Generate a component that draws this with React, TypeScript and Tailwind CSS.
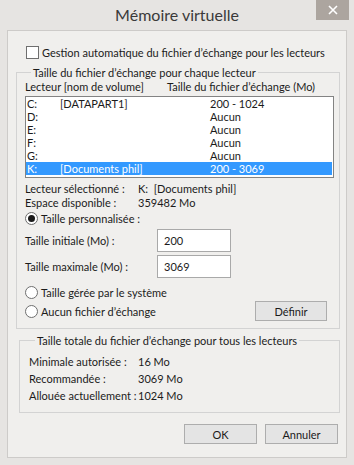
import React from 'react';

const drives = [
  { letter: 'C:', label: '[DATAPART1]', size: '200 - 1024' },
  { letter: 'D:', label: '', size: 'Aucun' },
  { letter: 'E:', label: '', size: 'Aucun' },
  { letter: 'F:', label: '', size: 'Aucun' },
  { letter: 'G:', label: '', size: 'Aucun' },
  { letter: 'K:', label: '[Documents phil]', size: '200 - 3069', selected: true },
];

const Radio = ({ checked, label }: { checked?: boolean; label: string }) => (
  <div className="flex items-center">
    <span className="shrink-0 w-[13px] h-[13px] rounded-full border border-[#6f6f6f] bg-white flex items-center justify-center">
      {checked && <span className="w-[7px] h-[7px] rounded-full bg-[#1a1a1a]"></span>}
    </span>
    <span className="ml-[3px]">{label}</span>
  </div>
);

const Button = ({ children, className }: { children: React.ReactNode; className?: string }) => (
  <div className={`shrink-0 h-[20px] border border-[#adadad] bg-[#e4e4e4] flex items-center justify-center ${className}`}>
    {children}
  </div>
);

const App: React.FC = () => {
  return (
    <div
      className="w-[354px] h-[465px] bg-[#e6e4e2] text-[11px] text-[#1b1b1b] leading-none whitespace-nowrap flex flex-col"
      style={{ fontFamily: 'Lato, "Liberation Sans", sans-serif' }}
    >
      {/* Title bar */}
      <div className="relative h-[30px] flex items-center justify-center">
        <span className="text-[16px] text-[#3a3a3a]">Mémoire virtuelle</span>
        <div className="absolute right-[5px] top-0 w-[33px] h-[20px] bg-[#aca59f] flex items-center justify-center">
          <svg width="10" height="10" viewBox="0 0 10 10">
            <path d="M1 1 L9 9 M9 1 L1 9" stroke="#fff" strokeWidth="1.6" />
          </svg>
        </div>
      </div>

      {/* Content */}
      <div className="ml-[7px] mr-[7px] h-[428px] border border-[#cdcbc9] bg-[#f0efed] flex flex-col">
        <div className="mt-[14px] h-[15px] pl-[18px] flex items-center">
          <span className="shrink-0 w-[13px] h-[13px] border border-[#6f6f6f] bg-white"></span>
          <span className="ml-[3px]">Gestion automatique du fichier d’échange pour les lecteurs</span>
        </div>

        <fieldset className="mt-[5px] ml-[8px] mr-[6px] border border-[#d3d3d3] pl-[8px] pr-[5px] pb-[7px]">
          <legend className="ml-[6px] px-[2px] h-[14px] flex items-center">Taille du fichier d’échange pour chaque lecteur</legend>
          <div className="h-[14px] flex items-center">
            <span className="shrink-0 w-[142px]">Lecteur [nom de volume]</span>
            <span>Taille du fichier d’échange (Mo)</span>
          </div>
          <div className="mt-[3px] h-[82px] border border-[#838383] bg-white pr-[1px]">
            {drives.map((d) => (
              <div
                key={d.letter}
                className={`h-[13px] flex items-center pl-[1px] ${d.selected ? 'bg-[#3399ff] text-white' : ''}`}
              >
                <span className="shrink-0 w-[33px]">{d.letter}</span>
                <span className="shrink-0 w-[150px]">{d.label}</span>
                <span>{d.size}</span>
              </div>
            ))}
          </div>

          <div className="mt-[3px] h-[14px] flex items-center">
            <span className="shrink-0 w-[113px]">Lecteur sélectionné :</span>
            <span>K:&nbsp;&nbsp;[Documents phil]</span>
          </div>
          <div className="h-[14px] flex items-center">
            <span className="shrink-0 w-[113px]">Espace disponible :</span>
            <span>359482 Mo</span>
          </div>
          <div className="mt-[2px] h-[14px] flex items-center">
            <Radio checked label="Taille personnalisée :" />
          </div>
          <div className="mt-[4px] h-[23px] flex items-center">
            <span className="shrink-0 w-[132px]">Taille initiale (Mo) :</span>
            <div className="shrink-0 w-[74px] h-[23px] border border-[#a9a9a9] bg-white flex items-center pl-[6px]">200</div>
          </div>
          <div className="mt-[3px] h-[23px] flex items-center">
            <span className="shrink-0 w-[132px]">Taille maximale (Mo) :</span>
            <div className="shrink-0 w-[74px] h-[23px] border border-[#a9a9a9] bg-white flex items-center pl-[6px]">3069</div>
          </div>
          <div className="mt-[7px] h-[14px] flex items-center">
            <Radio label="Taille gérée par le système" />
          </div>
          <div className="mt-[2px] h-[20px] flex items-center justify-between pr-[7px]">
            <Radio label="Aucun fichier d’échange" />
            <Button className="w-[72px]">Définir</Button>
          </div>
        </fieldset>

        <fieldset className="mt-[4px] ml-[11px] mr-[6px] border border-[#d3d3d3] pl-[9px] pb-[8px]">
          <legend className="ml-[6px] px-[2px] h-[14px] flex items-center">Taille totale du fichier d’échange pour tous les lecteurs</legend>
          <div className="mt-[6px] h-[17px] flex items-center">
            <span className="shrink-0 w-[109px]">Minimale autorisée :</span>
            <span>16 Mo</span>
          </div>
          <div className="h-[17px] flex items-center">
            <span className="shrink-0 w-[109px]">Recommandée :</span>
            <span>3069 Mo</span>
          </div>
          <div className="h-[17px] flex items-center">
            <span className="shrink-0 w-[109px]">Allouée actuellement :</span>
            <span>1024 Mo</span>
          </div>
        </fieldset>

        <div className="mt-[11px] flex justify-end gap-[8px] pr-[8px]">
          <Button className="w-[73px]">OK</Button>
          <Button className="w-[73px]">Annuler</Button>
        </div>
      </div>
    </div>
  );
};

export default App;
